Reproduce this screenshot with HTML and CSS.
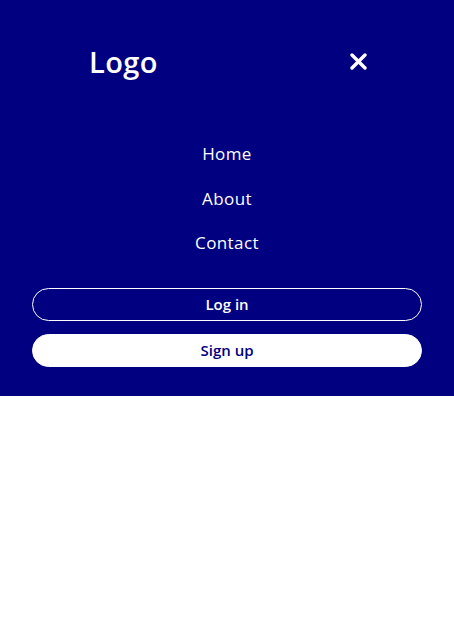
FILE: index.html
```html
<!DOCTYPE html>
<html lang="en">
<head>
<meta charset="utf-8">
<title>Menu</title>
<link rel="stylesheet" href="styles.css">
</head>
<body>
<div class="panel">
  <header class="header">
    <span class="logo">Logo</span>
    <button class="close" aria-label="Close menu">
      <svg width="17" height="17" viewBox="0 0 17 17"><path d="M2 2 L15 15 M15 2 L2 15" stroke="#fff" stroke-width="3.4" stroke-linecap="round" fill="none"/></svg>
    </button>
  </header>
  <nav class="nav">
    <a class="nav-link" href="#">Home</a>
    <a class="nav-link" href="#">About</a>
    <a class="nav-link" href="#">Contact</a>
  </nav>
  <div class="actions">
    <button class="btn btn-outline">Log in</button>
    <button class="btn btn-solid">Sign up</button>
  </div>
</div>
</body>
</html>
```
FILE: styles.css
```css
* { box-sizing: border-box; }
html, body { margin: 0; padding: 0; background: #fff; }
body { font-family: "Open Sans", "Noto Sans", sans-serif; }
.panel {
  background: #000080;
  height: 396px;
  padding: 0 32px;
  display: flex;
  flex-direction: column;
}
.header {
  height: 122px;
  display: flex;
  align-items: center;
  justify-content: space-between;
  padding: 0 55px 0 57px;
}
.logo {
  color: #fff;
  font-size: 29px;
  font-weight: 600;
  line-height: 1;
  letter-spacing: 0.4px;
}
.close {
  background: none;
  border: 0;
  padding: 0;
  width: 17px;
  height: 17px;
  display: flex;
}
.nav {
  margin-top: 10px;
  display: flex;
  flex-direction: column;
  align-items: center;
}
.nav-link {
  color: #fff;
  text-decoration: none;
  font-size: 17px;
  line-height: 44.5px;
  letter-spacing: 0.4px;
}
.actions {
  margin-top: 22px;
  display: flex;
  flex-direction: column;
  gap: 13px;
}
.btn {
  height: 33px;
  border-radius: 17px;
  font-family: inherit;
  font-size: 15px;
  font-weight: 600;
  cursor: pointer;
}
.btn-outline {
  background: transparent;
  color: #fff;
  border: 1px solid #fff;
}
.btn-solid {
  background: #fff;
  color: #000080;
  border: 1px solid #fff;
}
```
